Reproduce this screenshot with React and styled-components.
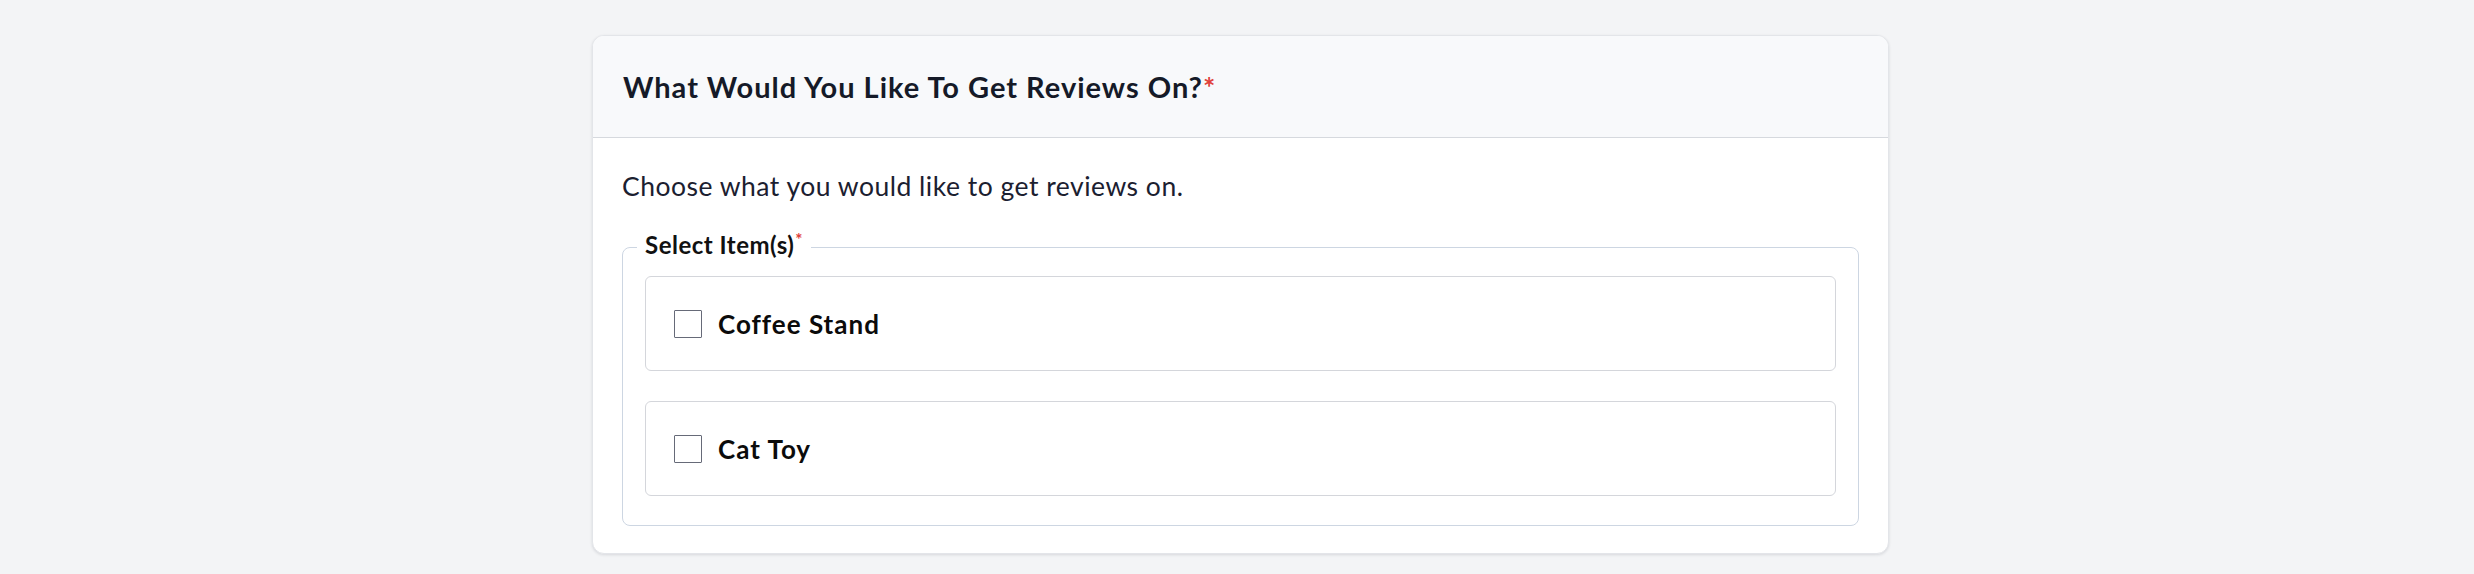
import React from "react";
import styled, { createGlobalStyle } from "styled-components";

const GlobalStyle = createGlobalStyle`
  html, body {
    margin: 0;
    padding: 0;
    background: #f3f4f6;
    font-family: "Lato", "Noto Sans", sans-serif;
  }
  * { box-sizing: border-box; }
`;

const Page = styled.div`
  display: flex;
  justify-content: center;
  padding: 35px 0 20px 7px;
`;

const Card = styled.section`
  width: 1297px;
  background: #ffffff;
  border: 1px solid #e3e5e9;
  border-radius: 12px;
  box-shadow: 0 1px 3px rgba(16, 24, 40, 0.12);
  overflow: hidden;
`;

const Header = styled.header`
  height: 102px;
  display: flex;
  align-items: center;
  padding: 0 30px;
  background: #f8f9fb;
  border-bottom: 1px solid #d6d9de;
`;

const Title = styled.h2`
  margin: 0;
  font-size: 29px;
  font-weight: 700;
  color: #151a28;
  letter-spacing: 1px;
`;

const Required = styled.span`
  color: #e0413a;
  font-size: ${(p) => (p.$small ? "17px" : "inherit")};
  vertical-align: ${(p) => (p.$small ? "top" : "baseline")};
  position: ${(p) => (p.$small ? "relative" : "static")};
  top: ${(p) => (p.$small ? "-5px" : "0")};
  margin-left: ${(p) => (p.$small ? "1px" : "0")};
`;

const Body = styled.div`
  padding: 29px 29px 27px;
`;

const Description = styled.p`
  margin: 0 0 25px;
  font-size: 26.5px;
  line-height: 38px;
  letter-spacing: 0.5px;
  color: #1b2030;
`;

const Fieldset = styled.fieldset`
  margin: 0;
  padding: 12px 22px 29px;
  border: 1px solid #cdd6e2;
  border-radius: 8px;
  display: flex;
  flex-direction: column;
  gap: 30px;
`;

const Legend = styled.legend`
  margin-left: -8px;
  padding: 0 8px 4px;
  font-size: 24px;
  line-height: 30px;
  font-weight: 700;
  letter-spacing: 0.5px;
  color: #111111;
`;

const Item = styled.label`
  height: 95px;
  display: flex;
  align-items: center;
  gap: 16px;
  padding: 0 28px;
  border: 1px solid #d4d6db;
  border-radius: 6px;
  cursor: pointer;
`;

const Checkbox = styled.input.attrs({ type: "checkbox" })`
  appearance: none;
  margin: 0;
  width: 28px;
  height: 28px;
  border: 1px solid #666a78;
  border-radius: 1px;
  background: #ffffff;
  flex: none;
`;

const ItemLabel = styled.span`
  font-size: 26px;
  font-weight: 700;
  letter-spacing: 1px;
  color: #0b0b0b;
`;

const items = ["Coffee Stand", "Cat Toy"];

export default function App() {
  return (
    <>
      <GlobalStyle />
      <Page>
        <Card>
          <Header>
            <Title>
              What Would You Like To Get Reviews On?<Required>*</Required>
            </Title>
          </Header>
          <Body>
            <Description>Choose what you would like to get reviews on.</Description>
            <Fieldset>
              <Legend>
                Select Item(s)<Required $small>*</Required>
              </Legend>
              {items.map((name) => (
                <Item key={name}>
                  <Checkbox />
                  <ItemLabel>{name}</ItemLabel>
                </Item>
              ))}
            </Fieldset>
          </Body>
        </Card>
      </Page>
    </>
  );
}
